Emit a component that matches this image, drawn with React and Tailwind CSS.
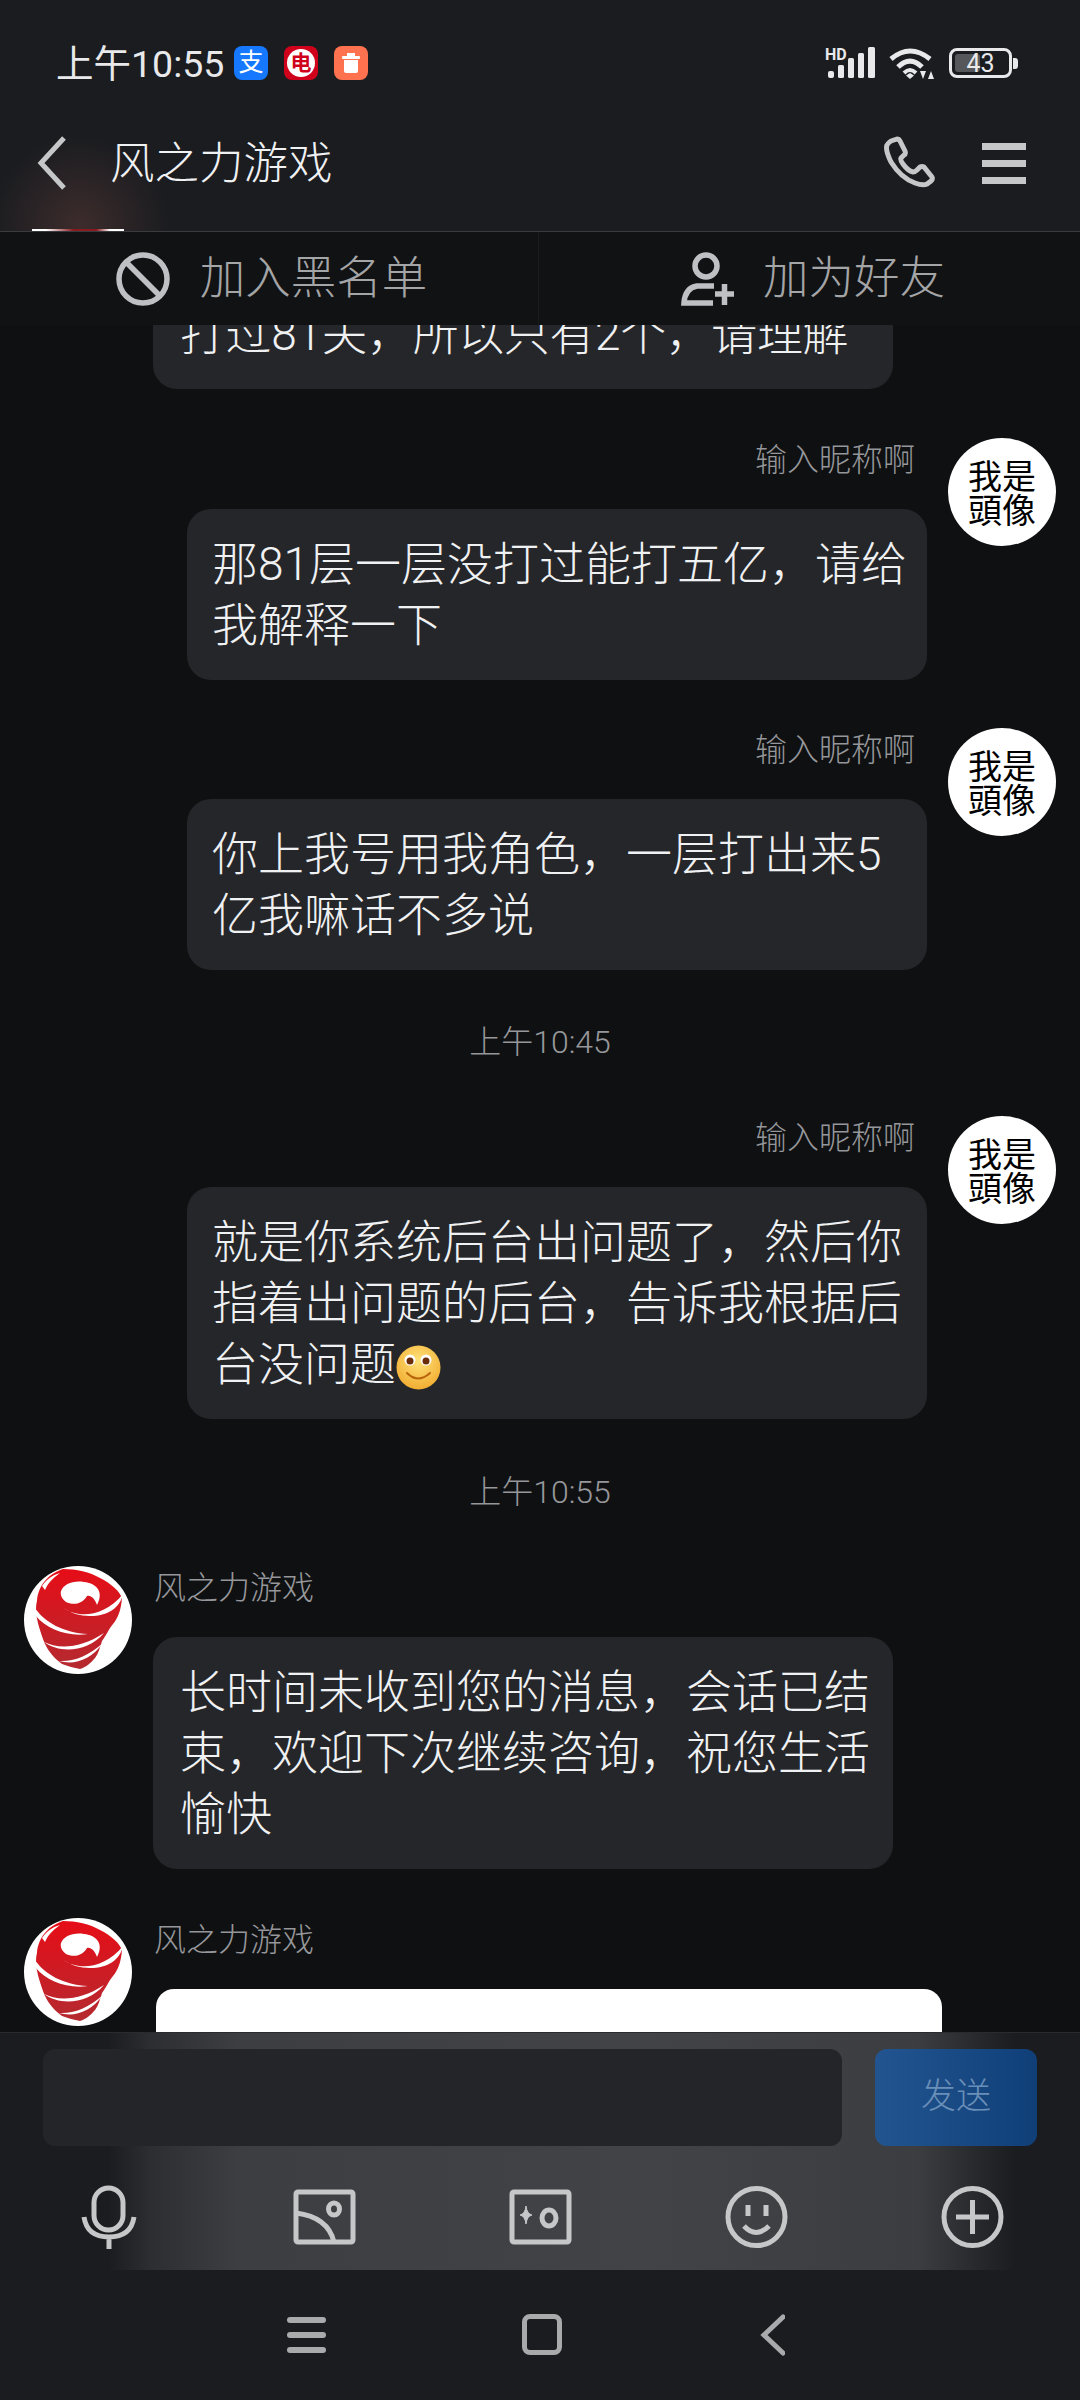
import React from "react";

const CJK = "font-['Roboto','Noto_Sans_CJK_SC',sans-serif]";

function MeAvatar() {
  return (
    <div className="w-[108px] h-[108px] shrink-0 rounded-full bg-white flex items-center justify-center text-[34px] leading-[34px] text-black text-center font-['Noto_Sans_CJK_TC',serif]">
      我是
      <br />
      頭像
    </div>
  );
}

function GameAvatar({ id }) {
  return (
    <svg width="108" height="108" viewBox="0 0 108 108" className="shrink-0">
      <defs>
        <linearGradient id={id} x1="0" y1="0" x2="0" y2="1">
          <stop offset="0%" stopColor="#e60d17" />
          <stop offset="100%" stopColor="#b42a30" />
        </linearGradient>
      </defs>
      <circle cx="54" cy="54" r="54" fill="#fff" />
      {/* tornado silhouette */}
      <path
        d="M13 35C14 20 24 8 39 3C52 3 66 6 76 12C88 18 96 26 98 32C97 44 94 52 89 58C84 64 82 70 78 75C76 82 74 88 71 92C66 98 62 101 56 103C50 102 44 100 38 98C30 92 25 86 21 78C17 68 13 56 12 46C12 42 12 38 13 35Z"
        fill={`url(#${id})`}
      />
      {/* swirl hole */}
      <path
        d="M37 25C40 17 52 13 65 17C75 20 79 28 73 39C71 33 67 29 63 30C58 39 48 39 42 36C38 33 36 29 37 25Z"
        fill="#fff"
      />
      {/* white slits */}
      <path d="M18 20C22 14 28 9 36 7C29 12 24 17 21 24Z" fill="#fff" />
      <path d="M40 42C52 52 80 52 99 28C96 42 84 50 66 50C56 50 46 47 40 42Z" fill="#fff" />
      <path d="M11 42C20 56 40 67 64 68C44 71 22 63 12 50Z" fill="#fff" />
      <path d="M20 76C34 83 56 83 80 67C64 86 36 88 20 76Z" fill="#fff" />
      <path d="M35 95C48 96 64 91 80 76C66 95 50 99 35 95Z" fill="#fff" />
    </svg>
  );
}

function Smile() {
  return (
    <svg width="45" height="45" viewBox="0 0 45 45" className="inline-block align-[2px] -my-3">
      <defs>
        <radialGradient id="smileFace" cx="50%" cy="35%" r="70%">
          <stop offset="0%" stopColor="#ffe27a" />
          <stop offset="100%" stopColor="#f0a92c" />
        </radialGradient>
      </defs>
      <circle cx="22.5" cy="22.5" r="22" fill="url(#smileFace)" />
      <circle cx="14" cy="15" r="5.5" fill="#fff" />
      <circle cx="30" cy="15" r="5.5" fill="#fff" />
      <circle cx="14" cy="16" r="3.5" fill="#6b2c08" />
      <circle cx="30" cy="16" r="3.5" fill="#6b2c08" />
      <path d="M11 28Q22 39 34 28" fill="none" stroke="#b8650c" strokeWidth="2" strokeLinecap="round" />
    </svg>
  );
}

function Bubble({ children, className = "" }) {
  return (
    <div className={`w-[740px] rounded-[24px] bg-[#252629] text-[46px] leading-[61px] text-[#f0f1f3] whitespace-nowrap font-light ${className}`}>
      {children}
    </div>
  );
}

function MyMessage({ lines }) {
  return (
    <div className="flex justify-end gap-[21px] pr-6">
      <div className="flex flex-col items-end">
        <div className="h-[71px] pr-3 text-[32px] font-light leading-[44px] text-[#96979a]">输入昵称啊</div>
        <Bubble className="px-[25px] py-[24.5px]">{lines}</Bubble>
      </div>
      <MeAvatar />
    </div>
  );
}

function TheirMessage({ id, children }) {
  return (
    <div className="flex gap-[21px] pl-6">
      <GameAvatar id={id} />
      <div className="flex flex-col">
        <div className="h-[71px] pl-[1px] text-[32px] font-light leading-[44px] text-[#96979a]">风之力游戏</div>
        {children}
      </div>
    </div>
  );
}

function TimeLabel({ children, className = "" }) {
  return (
    <div className={`flex items-center justify-center pb-[2px] text-[32px] font-light text-[#96979a] ${className}`}>
      {children}
    </div>
  );
}

function ToolIcon({ children, width = 63 }) {
  return (
    <svg width={width} height="64" viewBox={`0 0 ${width} 64`} fill="none" stroke="#c6c7c9" strokeWidth="5">
      {children}
    </svg>
  );
}

export default function App() {
  return (
    <div className={`w-[1080px] h-[2400px] flex flex-col overflow-hidden bg-[#0f1012] ${CJK}`}>
      {/* Header */}
      <header className="relative h-[232px] shrink-0 bg-[#1a1c20] bg-[radial-gradient(circle_at_80px_225px,#3d2c2c_0px,#1a1c20_90px)] border-b border-[#3a3b3e]">
        <div className="flex items-center justify-between h-[126px] pl-[56px] pr-[62px]">
          <div className="flex items-center">
            <span className="text-[37.5px] text-[#e9e9eb] w-[178px] whitespace-nowrap pt-[2px]">上午10:55</span>
            <div className="flex gap-4">
              <div className="w-[34px] h-[34px] rounded-[8px] bg-[#1677ff] text-white text-[25px] leading-[34px] text-center">支</div>
              <div className="w-[34px] h-[34px] rounded-[8px] bg-[#d0021b] flex items-center justify-center">
                <div className="w-[28px] h-[28px] rounded-full bg-white text-[#d0021b] text-[21px] leading-[28px] text-center font-bold">电</div>
              </div>
              <div className="w-[34px] h-[34px] rounded-[8px] bg-[#ff7250] flex items-center justify-center">
                <svg width="18" height="20" viewBox="0 0 18 20" fill="#fff">
                  <rect x="5" y="0" width="8" height="3" />
                  <rect x="0" y="3" width="18" height="3" rx="1" />
                  <path d="M2 7H16V18Q16 20 14 20H4Q2 20 2 18Z" />
                </svg>
              </div>
            </div>
          </div>
          <div className="flex items-center gap-[13px]">
            <svg width="50" height="36" viewBox="0 0 50 36" fill="#e9e9eb">
              <text x="0" y="15" fontSize="16" fontWeight="700" fontFamily="Roboto">HD</text>
              <rect x="3" y="26" width="6" height="7" rx="2" />
              <rect x="13" y="20" width="6" height="13" rx="1.5" />
              <rect x="23" y="13" width="6" height="20" rx="1.5" />
              <rect x="33" y="8" width="6" height="25" rx="1.5" />
              <rect x="43" y="2" width="7" height="31" rx="1.5" />
            </svg>
            <svg width="46" height="34" viewBox="0 0 46 34" fill="none" stroke="#e9e9eb" strokeWidth="5" strokeLinejoin="round">
              <path d="M3 13Q22 -3 42 13" />
              <path d="M10 21Q22 9 34 21" />
              <path d="M16 27Q22 21 28 27" strokeWidth="4" />
              <path d="M22 33L18 29.500L22 27L26 29.500Z" fill="#e9e9eb" stroke="none" />
              <path d="M32 25H38L35 33ZM40 33H46L43 25Z" fill="#e9e9eb" stroke="none" />
            </svg>
            <div className="flex items-center gap-[1px] ml-[2px]">
              <div className="relative w-[63px] h-[30px] rounded-[8px] border-[3.5px] border-[#e9e9eb] flex items-center justify-center text-[25px] leading-none text-[#e9e9eb]">
                <div className="absolute left-[3px] top-[3px] bottom-[3px] w-[25px] rounded-[3px] bg-[#56575a]" />
                <span className="relative">43</span>
              </div>
              <div className="w-[5px] h-[11px] rounded-r-[3px] bg-[#e9e9eb]" />
            </div>
          </div>
        </div>
        <div className="flex items-center justify-between h-[74px] pl-[37px] pr-[54px]">
          <div className="flex items-center gap-[44px]">
            <svg width="29" height="54" viewBox="0 0 29 54" fill="none" stroke="#c6c7c9" strokeWidth="5">
              <path d="M27 2L4 27L27 52" />
            </svg>
            <span className="text-[44.500px] font-light text-[#f0f1f3] pt-[2px]">风之力游戏</span>
          </div>
          <div className="flex items-center gap-[45px]">
            <svg width="54" height="54" viewBox="0 0 54 54" fill="none" stroke="#c6c7c9" strokeWidth="5" strokeLinejoin="round">
              <path d="M8 5L14 3Q16 3 17 5L22 15Q23 18 21 19L18 22Q17 24 20 28Q25 35 30 36Q32 36 34 34L37 31Q39 30 41 31L49 41Q50 43 48 45L44 48Q40 50 32 47Q18 42 8 26Q2 14 4 9Q5 7 8 5Z" />
            </svg>
            <div className="flex flex-col gap-[10px]">
              <div className="w-[44px] h-[7px] bg-[#c6c7c9]" />
              <div className="w-[44px] h-[7px] bg-[#c6c7c9]" />
              <div className="w-[44px] h-[7px] bg-[#c6c7c9]" />
            </div>
          </div>
        </div>
        {/* top of an avatar scrolled under the bar */}
        <div className="absolute left-[32px] bottom-0 w-[92px] h-[2px] bg-[linear-gradient(90deg,#fff_15%,#8a1a20_45%,#8a1a20_70%,#fff_85%)]" />
      </header>

      {/* Blacklist / add friend */}
      <div className="flex h-[93px] shrink-0 bg-[#111214] text-[45.500px] font-light text-[#a4a5a7]">
        <div className="w-[539px] flex items-center justify-center gap-[30px] pl-[5px] border-r border-[#1a1b1e]">
          <svg width="54" height="56" viewBox="0 0 54 56" fill="none" stroke="#bfc0c3" strokeWidth="5.500">
            <circle cx="27" cy="28" r="24" />
            <path d="M10 11L44 45" />
          </svg>
          <span className="pt-[2px]">加入黑名单</span>
        </div>
        <div className="flex-1 flex items-center justify-center gap-[29px] pl-[7px]">
          <svg width="53" height="54" viewBox="0 0 53 54" fill="none" stroke="#bfc0c3" strokeWidth="5.500">
            <circle cx="25" cy="14" r="11" />
            <path d="M33 34H16Q4 36 3 51H32" />
            <path d="M34 42H53M43.500 32V53" />
          </svg>
          <span className="pt-[2px]">加为好友</span>
        </div>
      </div>

      {/* Chat */}
      <main className="flex-1 overflow-hidden">
        <div className="pl-[153px] -mt-[46px]">
          <Bubble className="px-[27px] py-[24.5px] tracking-[-0.4px]">打过81关，所以只有2个，请理解</Bubble>
        </div>
        <div className="h-[49px]" />
        <MyMessage
          lines={
            <>
              那81层一层没打过能打五亿，请给
              <br />
              我解释一下
            </>
          }
        />
        <div className="h-[48px]" />
        <MyMessage
          lines={
            <>
              你上我号用我角色，一层打出来5
              <br />
              亿我嘛话不多说
            </>
          }
        />
        <TimeLabel className="h-[146px]">上午10:45</TimeLabel>
        <MyMessage
          lines={
            <>
              就是你系统后台出问题了，然后你
              <br />
              指着出问题的后台，告诉我根据后
              <br />
              台没问题
              <Smile />
            </>
          }
        />
        <TimeLabel className="h-[147px]">上午10:55</TimeLabel>
        <TheirMessage id="logoA">
          <Bubble className="px-[27px] py-[24.5px]">
            长时间未收到您的消息，会话已结
            <br />
            束，欢迎下次继续咨询，祝您生活
            <br />
            愉快
          </Bubble>
        </TheirMessage>
        <div className="h-[49px]" />
        <TheirMessage id="logoB">
          <div className="w-[786px] h-[200px] ml-[3px] rounded-[18px] bg-white" />
        </TheirMessage>
      </main>

      {/* Input area */}
      <div className="h-[238px] shrink-0 border-t border-[#2a2b2e] bg-[linear-gradient(90deg,#1a1c20_10%,#2c2e31_14%,#3d3e41_22%,#424346_60%,#3c3d40_85%,#1a1c20_94%)]">
        <div className="flex gap-[33px] pl-[43px] pr-[43px] pt-[16px]">
          <div className="w-[799px] h-[97px] rounded-[12px] bg-[#242528]" />
          <div className="w-[162px] h-[97px] rounded-[12px] bg-[linear-gradient(90deg,#225590,#103f78)] flex items-center justify-center text-[35px] font-light text-[#6a8fb8]">
            发送
          </div>
        </div>
        <div className="flex justify-between pl-[77px] pr-[76px] pt-[39px]">
          <ToolIcon>
            <rect x="17" y="3" width="29" height="42" rx="14.500" />
            <path d="M7 32Q10 52 32 52Q54 52 57 32M32 52V64" />
          </ToolIcon>
          <ToolIcon>
            <rect x="3" y="7" width="57" height="50" rx="2" />
            <ellipse cx="41" cy="24" rx="5.500" ry="6" />
            <path d="M3 28Q35 32 41 57" />
          </ToolIcon>
          <ToolIcon>
            <rect x="3" y="7" width="57" height="50" rx="2" />
            <ellipse cx="40" cy="33" rx="7" ry="8" />
            <path d="M17 21Q18 29 23 30Q18 31 17 39Q16 31 11 30Q16 29 17 21Z" fill="#c6c7c9" strokeWidth="1" />
          </ToolIcon>
          <ToolIcon>
            <circle cx="31.500" cy="32" r="28.500" />
            <path d="M23 20V31M41 20V31M19 41Q31 54 44 41" />
          </ToolIcon>
          <ToolIcon>
            <circle cx="31.500" cy="32" r="28.500" />
            <path d="M15 32H48M31.500 15V49" />
          </ToolIcon>
        </div>
      </div>

      {/* System nav */}
      <nav className="h-[130px] shrink-0 bg-[#1a1c20] flex items-center justify-between pl-[287px] pr-[295px] pb-[1px]">
        <div className="flex flex-col gap-[9px]">
          <div className="w-[39px] h-[6px] rounded-full bg-[#a9aaac]" />
          <div className="w-[39px] h-[6px] rounded-full bg-[#a9aaac]" />
          <div className="w-[39px] h-[6px] rounded-full bg-[#a9aaac]" />
        </div>
        <div className="w-[40px] h-[41px] -ml-[3px] rounded-[8px] border-[5px] border-[#a9aaac]" />
        <svg width="25" height="42" viewBox="0 0 25 42" fill="none" stroke="#a9aaac" strokeWidth="5" strokeLinecap="round">
          <path d="M23 3L4 21L23 39" />
        </svg>
      </nav>
    </div>
  );
}
